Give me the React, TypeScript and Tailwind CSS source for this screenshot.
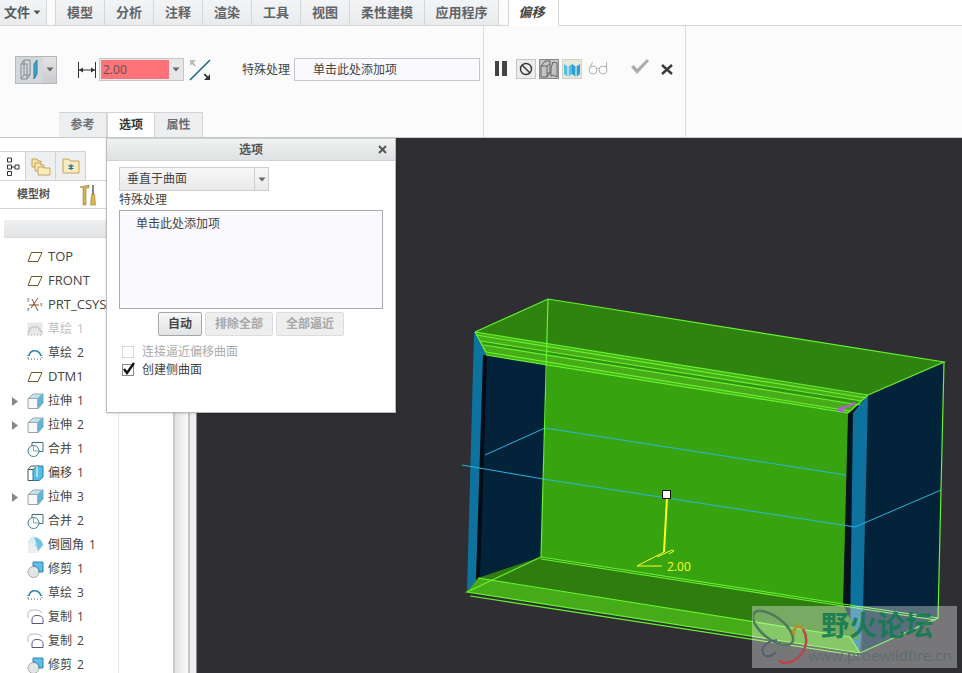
import React from "react";

const Caret = ({ c = "#666" }: { c?: string }) => (
  <svg width="8" height="5" viewBox="0 0 8 5"><path d="M0.5 0.5h7L4 4.5z" fill={c} /></svg>
);

const TopTab = ({ label, w }: { label: string; w: string }) => (
  <div className={`${w} h-full flex items-center justify-center border-r border-b border-[#d4d6d8] bg-gradient-to-b from-[#f3f4f5] to-[#e9ebec] text-[13px] font-bold text-[#5f6468]`}>{label}</div>
);

const Plane = () => (
  <svg width="16" height="12" viewBox="0 0 16 12"><path d="M4.500 1.500h10.500L11 10.500H1z" fill="#fff" stroke="#6b5a28" strokeWidth="1" /></svg>
);
const Csys = () => (
  <svg width="17" height="18" viewBox="0 0 17 18" fill="none">
    <path d="M11 2L4 12M5 3l6 12M2 9h10" stroke="#8a4b2a" strokeWidth="1" />
    <text x="0" y="5" fontSize="5" fill="#333" fontFamily="Liberation Sans">y</text>
    <text x="0" y="15" fontSize="5" fill="#333" fontFamily="Liberation Sans">z</text>
    <text x="13" y="10" fontSize="5" fill="#333" fontFamily="Liberation Sans">x</text>
  </svg>
);
const Sketch = ({ dim }: { dim?: boolean }) => (
  <svg width="16" height="14" viewBox="0 0 16 14" fill="none" opacity={dim ? 0.45 : 1}>
    {dim && <rect x="0.500" y="0.500" width="15" height="13" fill="#ccc" />}
    <path d="M2 10C3 3 12 3 14 10" stroke={dim ? "#888" : "#2a86ad"} strokeWidth="1.600" />
    <path d="M1 13h14" stroke="#555" strokeWidth="1" strokeDasharray="1 2" />
    <path d="M1 9v3M15 9v3" stroke="#555" strokeWidth="1" strokeDasharray="1 1" />
  </svg>
);
const Extrude = () => (
  <svg width="17" height="16" viewBox="0 0 17 16">
    <path d="M1 5.500h10v10H1z" fill="#f6f8fa" stroke="#9aa4aa" />
    <path d="M1 5.500L6 1h10l-5 4.500z" fill="#bfe3f2" stroke="#9aa4aa" />
    <path d="M11 5.500L16 1v9l-5 5.500z" fill="#5db7dc" stroke="#6ca7c0" />
  </svg>
);
const Merge = () => (
  <svg width="17" height="16" viewBox="0 0 17 16" fill="none">
    <path d="M5 1.500h11v9H12" stroke="#3c6e7e" />
    <path d="M5 1.500V5" stroke="#3c6e7e" />
    <circle cx="6.500" cy="10" r="5.500" stroke="#3c7d92" fill="#fff" />
    <path d="M6.500 4.500V10H12" stroke="#7aa" />
  </svg>
);
const Offset = () => (
  <svg width="17" height="16" viewBox="0 0 17 16">
    <path d="M1 4.500h8v11H1z" fill="#fff" stroke="#555" />
    <path d="M1 4.500L4 1h8L9 4.500z" fill="#fff" stroke="#555" />
    <path d="M6 4.500L10 1h6v11l-4 3.500H6z" fill="#56bde6" stroke="#2c7fa5" />
    <path d="M10 1v11" stroke="#fff" />
  </svg>
);
const Round = () => (
  <svg width="17" height="18" viewBox="0 0 17 18">
    <path d="M1 6h10v11H1z" fill="#eceef0" />
    <path d="M1 6L5 1c6 0 10 3 11 8l-5 6C11 10 7 6 1 6z" fill="#6cc2e6" stroke="#9cc" strokeWidth=".6" />
    <path d="M1 6L5 1h2l3 8" fill="#f4f6f8" opacity=".8" />
  </svg>
);
const Trim = () => (
  <svg width="17" height="17" viewBox="0 0 17 17">
    <circle cx="6.500" cy="11" r="5.500" fill="#e3e4e6" stroke="#aaa" />
    <path d="M6 1h10v10h-4C12 7 10 5 6 5z" fill="#5dbde8" stroke="#2d87ad" />
  </svg>
);
const Copy = () => (
  <svg width="17" height="16" viewBox="0 0 17 16" fill="none">
    <path d="M1 9V5C1 2 4 1 8 1s6 1 7 3" stroke="#b9b6c4" />
    <path d="M5 14.500v-4c0-3 2-4 5-4s6 1 6 4v4z" stroke="#5b5180" fill="#fff" />
  </svg>
);

const rows: [string, React.ReactNode, boolean, boolean?, boolean?][] = [
  ["TOP", <Plane />, false, false, true],
  ["FRONT", <Plane />, false, false, true],
  ["PRT_CSYS_", <Csys />, false, false, true],
  ["草绘 1", <Sketch dim />, false, true],
  ["草绘 2", <Sketch />, false],
  ["DTM1", <Plane />, false, false, true],
  ["拉伸 1", <Extrude />, true],
  ["拉伸 2", <Extrude />, true],
  ["合并 1", <Merge />, false],
  ["偏移 1", <Offset />, false],
  ["拉伸 3", <Extrude />, true],
  ["合并 2", <Merge />, false],
  ["倒圆角 1", <Round />, false],
  ["修剪 1", <Trim />, false],
  ["草绘 3", <Sketch />, false],
  ["复制 1", <Copy />, false],
  ["复制 2", <Copy />, false],
  ["修剪 2", <Trim />, false],
];

const LowerTab = ({ label, active }: { label: string; active?: boolean }) => (
  <div className={`w-[48px] h-full flex items-center justify-center border-r border-t border-[#d2d4d6] text-[12px] font-bold ${active ? "bg-white text-[#333] border-l" : "bg-[#eceeef] text-[#6b6f72]"}`}>{label}</div>
);

const Viewport = () => (
  <svg viewBox="197 138 765 535" className="w-full h-full block">
    <path d="M474 332L486 352 478 578 467 592z" fill="#0e729e" />
    <path d="M486 355L547 365 541 557 478 578z" fill="#03233a" />
    <path d="M483 355L487 355 480 578 476 580z" fill="#020c14" />
    <path d="M868 395L944 362 938 618 862 653z" fill="#03233a" />
    <path d="M848 413L868 395 860 653 843 603z" fill="#04141f" />
    <path d="M853 413L868 395 863 607 860 653 850 637z" fill="#0e729e" />
    <path d="M547 364L848 413 843 604 541 557z" fill="#37a30f" />
    <path d="M475 332L548 299 944 362 868 395z" fill="#2f840f" />
    <path d="M475 332L868 395 848 413 486 355z" fill="#48ab18" />
    <path d="M481 341L862 401 860 405 484 345z" fill="#339412" />
    <path d="M541 557L843 604 860 640 600 600 478 578z" fill="#2f7d0e" />
    <path d="M478 578L850 637 860 653 467 592z" fill="#46ab18" />
    <g stroke="#2fb4d6" strokeWidth="1" fill="none">
      <path d="M485 455L545 428 846 475" />
      <path d="M462 465L543 479 855 527 941 490" />
    </g>
    <g stroke="#66f22f" strokeWidth="1.200" fill="none">
      <path d="M475 332L548 299 944 362 868 395" />
      <path d="M475 332L868 395" />
      <path d="M476 335L866 398" />
      <path d="M548 299L541 557" />
      <path d="M484 345L860 405" />
      <path d="M481 341L862 401" />
      <path d="M486 352L850 411" />
      <path d="M486 355L848 413" />
      <path d="M944 362L938 618 860 653 467 592 541 557" />
      <path d="M478 578L850 637" />
      <path d="M541 557L843 604 938 618" />
      <path d="M541 559L843 606 936 620" />
      <path d="M470 596L860 656" />
      <path d="M868 395L848 413" />
      <path d="M475 332L486 352" />
      <path d="M850 637L860 653" />
    </g>
    <path d="M855 403L839 410" stroke="#b25fd6" strokeWidth="2" />
    <path d="M836 410L844 405 843 413z" fill="#b25fd6" />
    <path d="M667 498L664 552" stroke="#ffff20" strokeWidth="2" />
    <path d="M637 566L664 552M637 566H662" stroke="#ffff20" strokeWidth="1" fill="none" />
    <path d="M657 557L672 550l2 1-5 3" stroke="#ffff20" strokeWidth="1" fill="none" />
    <rect x="662.500" y="490.500" width="8" height="8" fill="#fff" stroke="#111" />
    <text x="667" y="571" fontSize="12" fill="#ffff20" fontFamily="Open Sans, sans-serif">2.00</text>
  </svg>
);

export default function App() {
  return (
    <div className="relative w-[962px] h-[673px] overflow-hidden flex flex-col bg-[#fbfbfb] font-['Open_Sans','Noto_Sans_CJK_SC',sans-serif] text-[#444]">
      <div className="h-[26px] flex shrink-0">
        <div className="w-[47px] h-full flex items-center pl-[4px] gap-[3px] border-r border-b border-[#d4d6d8] bg-gradient-to-b from-[#f3f4f5] to-[#e9ebec] text-[13px] font-bold text-[#55595c]">文件<Caret c="#555" /></div>
        <div className="w-[8px] border-b border-[#d4d6d8]" />
        <div className="w-[1px] bg-[#d4d6d8]" />
        <TopTab label="模型" w="w-[49px]" />
        <TopTab label="分析" w="w-[49px]" />
        <TopTab label="注释" w="w-[49px]" />
        <TopTab label="渲染" w="w-[49px]" />
        <TopTab label="工具" w="w-[49px]" />
        <TopTab label="视图" w="w-[49px]" />
        <TopTab label="柔性建模" w="w-[75px]" />
        <TopTab label="应用程序" w="w-[74px]" />
        <div className="w-[9px] border-b border-[#d4d6d8]" />
        <div className="w-[51px] h-full flex items-center justify-center pr-[4px] border-l border-r border-[#d4d6d8] bg-white text-[13px] font-bold italic text-[#444]">偏移</div>
        <div className="flex-1 border-b border-[#d4d6d8] bg-white" />
      </div>

      <div className="h-[112px] shrink-0 flex border-b border-[#c8cacc]">
        <div className="w-[484px] h-full flex flex-col border-r border-[#dcdddf]">
          <div className="h-[86px] flex items-center pl-[15px] pt-[1px]">
            <div className="w-[42px] h-[28px] flex border border-[#b5b7b9] bg-gradient-to-b from-[#e2e4e6] to-[#c9cbce]">
              <div className="w-[27px] flex items-center justify-center bg-[#d5d8da]">
                <svg width="19" height="21" viewBox="0 0 19 21" fill="none"><path d="M1 5h6v15H1zM1 5l3-4h6v15l-3 4M4 1v15h6M1 20l3-4" stroke="#7a8b92" /><path d="M14 5l3-4v14l-3 5z" fill="#3ea7cf" stroke="#2a7fa2" /></svg>
              </div>
              <div className="flex-1 flex items-center justify-center"><Caret /></div>
            </div>
            <svg className="ml-[21px]" width="18" height="16" viewBox="0 0 18 16" fill="none"><path d="M.500 0v16M17.500 0v16M1 8h16" stroke="#333" /><path d="M1 8l4-2.500v5zM17 8l-4-2.500v5z" fill="#333" /></svg>
            <div className="ml-[3px] w-[85px] h-[23px] flex border border-[#c4c6c8] bg-[#e6e7e8]">
              <div className="w-[68px] m-px mr-0 bg-[#ff7379] text-[12px] leading-[19px] pl-[2px] text-[#555]">2.00</div>
              <div className="flex-1 flex items-center justify-center"><Caret /></div>
            </div>
            <svg className="ml-[5px]" width="22" height="22" viewBox="0 0 22 22" fill="none"><path d="M1 21L21 1" stroke="#1c6a86" strokeWidth="1.600" /><path d="M1 1h6L4.500 3.500l2.500 3-1.500 1-2.500-2.500L1 7z" fill="#bbb" /><path d="M21 21h-6l2.500-2.500-3-3 1.500-1 3 3L21 15z" fill="#333" /></svg>
            <div className="ml-[31px] text-[12px] text-[#444] whitespace-nowrap">特殊处理</div>
            <div className="ml-[4px] w-[186px] h-[23px] border border-[#c6c6cc] bg-[#faf9fd] text-[12px] leading-[21px] pl-[18px] text-[#444]">单击此处添加项</div>
          </div>
          <div className="h-[25px] flex pl-[59px]">
            <LowerTab label="参考" />
            <LowerTab label="选项" active />
            <LowerTab label="属性" />
          </div>
        </div>
        <div className="w-[202px] h-full border-r border-[#dcdddf] flex items-start pt-[33px] pl-[11px]">
          <div className="flex gap-[3px] w-[12px] h-[15px] mt-[2px]"><div className="w-[4px] h-full bg-[#444]" /><div className="w-[5px] h-full bg-[#444]" /></div>
          <div className="ml-[9px] w-[20px] h-[20px] flex items-center justify-center border border-[#c4c4c4] bg-[#ececec]">
            <svg width="14" height="14" viewBox="0 0 14 14" fill="none"><circle cx="7" cy="7" r="5.500" stroke="#333" strokeWidth="1.400" /><path d="M3 3l8 8" stroke="#333" strokeWidth="1.400" /></svg>
          </div>
          <div className="ml-[3px] w-[20px] h-[20px] flex items-center justify-center border border-[#888] bg-[#c4c4c4]">
            <svg width="18" height="18" viewBox="0 0 18 18" fill="none"><path d="M1 6h6v11H1zM1 6l4-5h5v3M7 17l3-4M7 6l3-2v9H7M13 2l4 1M13 2l-2 6v8l2-1 4 2V3" stroke="#5a5a5a" strokeWidth=".9" /></svg>
          </div>
          <div className="ml-[3px] w-[20px] h-[20px] flex items-center justify-center border border-[#d0d0cc] bg-[#e9e6da]">
            <svg width="18" height="16" viewBox="0 0 18 16"><path d="M1 3l4 3 4-3v10l-4 3-4-3z" fill="#58bde4" /><path d="M9 3l4 3 4-3v10l-4 3-4-3z" fill="#2b9fd0" /><path d="M5 6v10M13 6v10" stroke="#fff" /></svg>
          </div>
          <svg className="ml-[6px] mt-[1px]" width="20" height="16" viewBox="0 0 20 16" fill="none" stroke="#b0b3b2"><circle cx="5" cy="10" r="4" /><circle cx="15" cy="10" r="4" /><path d="M9 9c1-1 1-1 2 0M1.500 9l3-7M18.500 9V2" /></svg>
          <svg className="ml-[22px] mt-[-1px]" width="20" height="17" viewBox="0 0 20 17"><path d="M1 9l3-2 3 4L17 1l2 2L7 16z" fill="#a9adae" /></svg>
          <svg className="ml-[11px] mt-[5px]" width="12" height="11" viewBox="0 0 12 11" fill="none"><path d="M1 1l10 9M11 1L1 10" stroke="#3a3a3a" strokeWidth="2.400" /></svg>
        </div>
        <div className="flex-1" />
      </div>

      <div className="flex-1 flex min-h-0">
        <div className="w-[197px] flex shrink-0">
          <div className="w-[175px] flex flex-col bg-white border-r-2 border-[#c9cbcd] overflow-hidden relative">
            <div className="h-[43px] flex items-end pl-0 border-b border-[#d4d6d8] shrink-0">
              <div className="w-[26px] h-[29px] flex items-center justify-center bg-white border-r border-t border-[#d0d2d4]">
                <svg width="14" height="19" viewBox="0 0 14 19" fill="none" stroke="#333"><path d="M1.500 1h4v4h-4zM1.500 8h4v4h-4zM1.500 14.500h4v4h-4zM9 8h4v4H9zM5.500 10H9" /></svg>
              </div>
              <div className="w-[30px] h-[29px] flex items-center justify-center bg-[#eeeff0] border-r border-t border-[#d0d2d4]">
                <svg width="20" height="20" viewBox="0 0 20 20"><path d="M1 3h5l1 2h3v6H1z" fill="#f6e3a8" stroke="#c4a45c" /><path d="M4 7h5l1 2h3v6H4z" fill="#f8e7b3" stroke="#c4a45c" /><path d="M7 11h5l1 1h6v7H7z" fill="#fbecc0" stroke="#c4a45c" /></svg>
              </div>
              <div className="w-[30px] h-[29px] flex items-center justify-center bg-[#eeeff0] border-r border-t border-[#d0d2d4]">
                <svg width="18" height="16" viewBox="0 0 18 16"><path d="M1 1h6l1 2h9v12H1z" fill="#fbecc0" stroke="#c4a45c" /><path d="M9 6v6M6.500 7.500l5 3M11.500 7.500l-5 3" stroke="#1c6f93" strokeWidth="1.200" /></svg>
              </div>
            </div>
            <div className="h-[28px] flex items-center shrink-0 border-b border-[#d4d6d8] pl-[17px]">
              <span className="text-[11px] font-bold text-[#555] w-[63px]">模型树</span>
              <svg width="17" height="22" viewBox="0 0 17 22"><path d="M0 3l9-2v3H6v17H3V4z" fill="#d8b552" stroke="#7c6a34" strokeWidth=".5" /><path d="M13 1v9" stroke="#666" strokeWidth="1.600" /><path d="M11.500 10h3l1 11h-5z" fill="#e0b54a" stroke="#7c6a34" strokeWidth=".5" /></svg>
            </div>
            <div className="h-[11px] shrink-0" />
            <div className="h-[18px] ml-[4px] bg-gradient-to-b from-[#eff0f1] to-[#e2e3e5] shrink-0 border-b border-[#d8d9db]" />
            <div className="flex flex-col pt-[7px] pl-[11px]">
              {rows.map(([t, icon, arrow, dim, latin]) => (
                <div key={t} className="h-[24px] flex items-center shrink-0">
                  <div className="w-[16px] flex items-center shrink-0">
                    {arrow && <svg width="8" height="9" viewBox="0 0 8 9"><path d="M1 0l6 4.500-6 4.500z" fill="#888" /></svg>}
                  </div>
                  <div className="w-[21px] flex items-center justify-start shrink-0">{icon}</div>
                  <span className={`whitespace-nowrap ${latin ? "text-[13px]" : "text-[12px] [word-spacing:2px]"} ${dim ? "text-[#bdbdbd]" : "text-[#444]"}`}>{t}</span>
                </div>
              ))}
            </div>
            <div className="absolute left-[118px] top-[100px] bottom-0 w-px bg-[#e8e9ea]" />
          </div>
          <div className="flex-1 flex bg-[#f4f4f5]">
            <div className="w-[13px] flex items-center justify-center bg-gradient-to-r from-[#e2e3e4] to-[#fafafa]">
              <div className="flex flex-col gap-[1px] mt-[-12px]">
                {[0, 1, 2, 3].map((i) => <div key={i} className="w-[7px] h-[1px] bg-[#b4b6b8]" />)}
              </div>
            </div>
            <div className="w-[2px] bg-[#c4c6c8]" />
            <div className="flex-1 bg-[#eeeeef]" />
            <div className="w-[1px] bg-[#888]" />
          </div>
        </div>
        <div className="flex-1 relative bg-[#2e2e33] overflow-hidden">
          <Viewport />
          <div className="absolute left-[555px] top-[468px] w-[205px] h-[62px] bg-white/35 overflow-hidden">
            <svg className="absolute left-[1px] top-[2px]" width="62" height="58" viewBox="0 0 62 58" fill="none">
              <ellipse cx="20" cy="20" rx="24" ry="11" transform="rotate(38 20 20)" stroke="#4f7a5c" strokeWidth="2.500" />
              <path d="M50 21c6 10 4 24-10 32-8 3-12 2-14-1" stroke="#b5484c" strokeWidth="2.500" />
              <path d="M50 21c-6-6-10 0-9 6" stroke="#b98e2a" strokeWidth="3" />
              <path d="M24 32c-10 1-18 8-13 15 4 3 8 1 12-3" stroke="#55606e" strokeWidth="2" />
            </svg>
            <div className="absolute left-[69px] top-[2px] text-[28px] leading-[34px] font-bold text-[#127a50]/90 whitespace-nowrap">野火论坛</div>
            <div className="absolute left-[56px] top-[38px] text-[15px] leading-[22px] text-[#5e6b72] whitespace-nowrap">www.proewildfire.cn</div>
          </div>
        </div>
      </div>

      <div className="absolute left-[106px] top-[138px] w-[290px] h-[275px] bg-white border-r border-b border-l border-[#b8babc] flex flex-col shadow-sm">
        <div className="h-[23px] shrink-0 relative flex items-center justify-center bg-gradient-to-b from-[#f1f2f2] to-[#dfe1e2] border-b border-[#cfd1d3] border-t">
          <span className="text-[12px] font-bold text-[#555] pt-px">选项</span>
          <svg className="absolute right-[8px] top-[6px]" width="9" height="9" viewBox="0 0 9 9"><path d="M1 1l7 7M8 1L1 8" stroke="#555" strokeWidth="2" /></svg>
        </div>
        <div className="flex flex-col pl-[12px] pt-[6px]">
          <div className="w-[150px] h-[24px] flex border border-[#cccdcf] bg-gradient-to-b from-[#f7f7f8] to-[#e9eaeb]">
            <div className="flex-1 text-[12px] leading-[22px] pl-[7px] text-[#444]">垂直于曲面</div>
            <div className="w-[14px] flex items-center justify-center border-l border-[#cccdcf]"><Caret /></div>
          </div>
          <div className="text-[12px] leading-[16px] mt-[1px] text-[#444]">特殊处理</div>
          <div className="mt-[2px] w-[264px] h-[99px] border border-[#a9aaae] bg-[#faf9fd] text-[12px] leading-[16px] pt-[5px] pl-[16px] text-[#444]">单击此处添加项</div>
          <div className="flex mt-[3px] ml-[39px] gap-[3px]">
            <div className="w-[44px] h-[24px] flex items-center justify-center rounded-[2px] border border-[#a5a7a9] bg-gradient-to-b from-[#f7f7f7] to-[#e2e3e4] text-[12px] font-bold text-[#444]">自动</div>
            <div className="w-[68px] h-[24px] flex items-center justify-center rounded-[2px] border border-[#dcdde0] bg-[#eeeeef] text-[12px] font-bold text-[#a6a8aa]">排除全部</div>
            <div className="w-[68px] h-[24px] flex items-center justify-center rounded-[2px] border border-[#dcdde0] bg-[#eeeeef] text-[12px] font-bold text-[#a6a8aa]">全部逼近</div>
          </div>
          <div className="flex items-center mt-[7px] ml-[3px] h-[17px]">
            <div className="w-[12px] h-[12px] border border-[#d6d6d8] bg-white" />
            <span className="ml-[8px] text-[12px] text-[#a9abad]">连接逼近偏移曲面</span>
          </div>
          <div className="flex items-center mt-[1px] ml-[3px] h-[18px] relative">
            <div className="w-[12px] h-[12px] border border-[#888] bg-white relative">
              <svg className="absolute left-[-1px] top-[-4px]" width="14" height="15" viewBox="0 0 14 15" fill="none"><path d="M2 8l3 4 7-10" stroke="#111" strokeWidth="2.400" /></svg>
            </div>
            <span className="ml-[8px] text-[12px] text-[#444]">创建侧曲面</span>
          </div>
        </div>
      </div>
    </div>
  );
}
